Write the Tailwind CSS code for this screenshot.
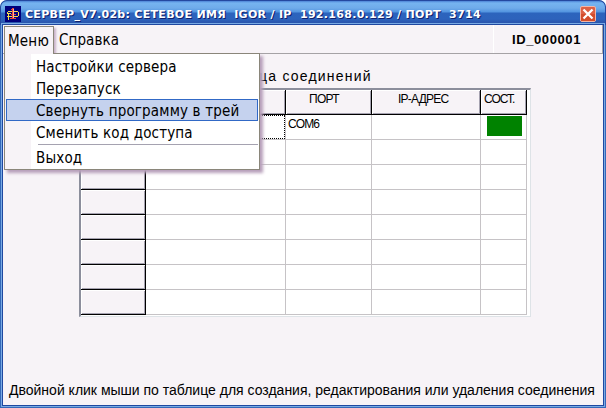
<!DOCTYPE html>
<html lang="ru">
<head>
<meta charset="utf-8">
<title>СЕРВЕР</title>
<script src="https://cdn.jsdelivr.net/npm/@tailwindcss/browser@4"></script>
</head>
<body class="w-[606px] h-[408px] overflow-hidden bg-white">
<div class="relative flex flex-col w-[606px] h-[408px] rounded-t-[7px] overflow-hidden bg-[#3468b8] font-['Liberation_Sans',sans-serif] text-black whitespace-nowrap">
  <header class="flex items-center h-[25px] shrink-0 pl-[4px] pr-[10px] rounded-t-[7px] border border-b-0 border-[#2448a0] bg-[linear-gradient(180deg,#4b83d6_0px,#76b4f0_2px,#6fabea_7px,#5294e0_11px,#2c64bd_12px,#2d63bc_18px,#2a55ac_22px,#244a9d_24px)]">
    <svg class="w-4 h-4 shrink-0 mt-[2px]" viewBox="0 0 16 16" shape-rendering="crispEdges">
      <rect width="16" height="16" fill="#00007c"/>
      <path d="M3 5h4v1H3zM2 6h1v2H2zM2 7h4v1H2zM3 8h1v6H3zM2 10h11v1H2zM9 5h4v1H9zM13 6h1v4h-1z" fill="#f8e048"/>
      <path d="M7 2h2v11H7zM6 3h1v1H6zM5 12h6v1H5zM6 8h5v1H6z" fill="#e84838"/>
      <path d="M8 3h1v9H8z" fill="#ffb8a0"/>
    </svg>
    <h1 class="ml-[4px] mt-[3px] w-[482px] whitespace-pre font-['DejaVu_Sans',sans-serif] font-bold text-[11px] leading-[16px] tracking-[0.3px] text-white [text-shadow:1px_1px_0_#10206c]">СЕРВЕР_V7.02b: СЕТЕВОЕ ИМЯ  IGOR / IP  192.168.0.129 / ПОРТ  3714</h1>
    <svg class="ml-auto mr-[-1px] mt-[1px] w-4 h-4 shrink-0" viewBox="0 0 16 16">
      <rect x=".5" y=".5" width="15" height="15" rx="1.5" fill="#dc6044" stroke="#f3b5a6"/>
      <rect x="1" y="8" width="14" height="7" fill="#d34c2b"/>
      <path d="M3.5 3.5l9 9M12.5 3.5l-9 9" stroke="#fff" stroke-width="2.3"/>
    </svg>
  </header>

  <div class="flex flex-col grow mx-[3px] mb-[3px] bg-[#f7f3f7] outline outline-1 outline-[#1f48a0] shadow-[0_0_0_2px_#79aae4]">
    <nav class="flex h-[29px] shrink-0 border-b border-[#a5a2a5] font-['DejaVu_Sans_Condensed','DejaVu_Sans',sans-serif] text-[15px] leading-[28px]">
      <div class="w-[50px] mt-px ml-px pl-[3px] border border-b-0 border-[#8a867a] shadow-[2px_2px_2px_#c9b3c9] leading-[28px] h-[28px]"><span class="tracking-[0.2px]">Меню</span></div>
      <div class="pl-[5px] pt-[1px]"><span class="tracking-[0.1px]">Справка</span></div>
      <div class="ml-auto w-[110px] h-[28px] border-l border-white border-r border-r-[#a5a2a5] pl-[18px] font-['Liberation_Sans',sans-serif] font-bold text-[13px] leading-[29px] tracking-[0.6px]">ID_000001</div>
    </nav>

    <main class="flex flex-col grow">
      <div class="h-[34px] pt-[12px] pl-[211px] text-[14px] leading-[20px]"><span class="tracking-[1.2px]">Таблица соединений</span></div>
      <div class="ml-[76px] w-[452px] h-[229px] bg-white border-t-2 border-l-2 border-[#8c8e9c] border-r border-r-[#dee3e7] border-b border-b-[#dee3e7]">
        <div class="grid grid-cols-[65px_140px_86px_109px_46px] grid-rows-[25px_repeat(8,25px)] text-[12px] leading-[18px]
          [&>div]:border-r [&>div]:border-b [&>div]:border-[#c6c3c6] [&>b]:font-normal [&>b]:bg-[#f7f3f7] [&>b]:border-r [&>b]:border-b [&>b]:border-black [&>b]:shadow-[inset_1px_1px_0_#fff,inset_-1px_-1px_0_#a5a2b0]">
          <b></b><b></b><b class="pl-[23px]"><span class="tracking-[-0.75px]">ПОРТ</span></b><b class="pl-[26px]"><span class="tracking-[-0.75px]">IP-АДРЕС</span></b><b class="pl-[3px]"><span class="tracking-[-1px]">СОСТ.</span></b>
          <b></b><div class="relative"><i class="absolute inset-0 border border-dotted border-black"></i></div><div class="pl-[2px]"><span class="tracking-[-0.9px]">COM6</span></div><div></div><div class="pl-[6px] pt-px"><i class="block w-[35px] h-[20px] bg-[#008200]"></i></div>
          <b></b><div></div><div></div><div></div><div></div>
          <b></b><div></div><div></div><div></div><div></div>
          <b></b><div></div><div></div><div></div><div></div>
          <b></b><div></div><div></div><div></div><div></div>
          <b></b><div></div><div></div><div></div><div></div>
          <b></b><div></div><div></div><div></div><div></div>
          <b></b><div></div><div></div><div></div><div></div>
        </div>
      </div>
      <footer class="mt-auto mb-[5px] pl-[6px] text-[14px] leading-[20px]"><span>Двойной клик мыши по таблице для создания, редактирования или удаления соединения</span></footer>
    </main>
  </div>

  <div class="absolute left-[4px] top-[53px] w-[256px] h-[117px] border border-[#8a867a] bg-[linear-gradient(90deg,#f7f3f7_26px,#fff_26px)] shadow-[3px_3px_3px_#b79fba] pt-px px-px font-['DejaVu_Sans_Condensed','DejaVu_Sans',sans-serif] text-[15px] leading-[22px] tracking-[0.17px] [&>p]:h-[22px] [&>p]:pl-[30px]">
    <i class="absolute left-0 top-[-1px] w-[48px] h-px bg-[#f7f3f7]"></i>
    <p class="pt-px"><span>Настройки сервера</span></p>
    <p class="pt-px"><span>Перезапуск</span></p>
    <p class="outline outline-1 outline-offset-[-1px] outline-[#3169c6] bg-[#c5d2ee] pt-px"><span>Свернуть программу в трей</span></p>
    <p class="pt-px"><span>Сменить код доступа</span></p>
    <hr class="ml-[32px] mt-[1px] mb-[2px] border-t border-[#a5a2b0]">
    <p><span>Выход</span></p>
  </div>
</div>
</body>
</html>
